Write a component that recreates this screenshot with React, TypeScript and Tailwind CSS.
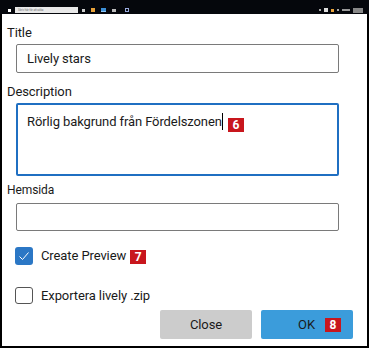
import React from "react";

const font = { fontFamily: 'Roboto, "Noto Sans", sans-serif' };

function Badge({ n }: { n: string }) {
  return (
    <span className="inline-flex items-center justify-center w-[16px] h-[14px] bg-[#c8161d] text-white text-[12px] font-bold leading-none tracking-normal">
      {n}
    </span>
  );
}

export default function App() {
  return (
    <div className="w-[369px] h-[348px] bg-black flex flex-col tracking-[-0.1px]" style={font}>
      {/* taskbar strip */}
      <div className="h-[14px] shrink-0 bg-[#05070c] relative flex items-end">
        <div className="flex items-center h-[7px] w-full pb-[1px]">
          <div className="w-[3px] h-[3px] bg-white ml-[8px]" />
          <div className="w-[63px] h-[6px] bg-[#e8e8e8] ml-[4px] flex items-center">
            <span className="text-[3px] text-[#777] ml-[3px] leading-none">Skriv här för att söka</span>
          </div>
          <div className="flex items-center gap-[6px] ml-[4px]">
            <div className="w-[3px] h-[3px] bg-[#ccc]" />
            <div className="w-[4px] h-[4px] bg-[#e8a23a]" />
            <div className="w-[5px] h-[4px] bg-[#3c8fd6] border-b border-[#8cc6f5]" />
            <div className="w-[4px] h-[3px] bg-[#bbb]" />
            <div className="w-[4px] h-[4px] border border-[#9ad] ml-[3px]" />
          </div>
          <div className="flex-1" />
          <div className="flex items-center gap-[3px] mr-[6px]">
            <div className="w-[2px] h-[2px] bg-[#aaa]" />
            <div className="w-[4px] h-[4px] bg-[#ddd]" />
            <div className="w-[3px] h-[3px] bg-[#e8a23a]" />
            <div className="w-[2px] h-[2px] bg-[#aaa]" />
            <div className="w-[8px] h-[2px] bg-[#999]" />
            <div className="w-[10px] h-[5px] bg-[#888]" />
          </div>
        </div>
      </div>
      {/* dialog */}
      <div className="flex-1 bg-white mx-[2px] mb-[2px] pl-[5px] flex flex-col text-[#1a1a1a]">
        <div className="mt-[11px] text-[13px] leading-[16px]">Title</div>
        <div className="mt-[3px] ml-[9px] w-[323px] h-[29px] border border-[#7a7a7a] rounded-[2px] flex items-center pl-[10px] text-[13px]">
          Lively stars
        </div>
        <div className="mt-[11px] text-[13px] leading-[16px]">Description</div>
        <div className="mt-[3px] ml-[9px] w-[323px] h-[73px] border-2 border-[#1f6fc2] rounded-[2px] pl-[9px] pt-[9px] text-[13px] flex items-start">
          <span className="leading-[16px]">Rörlig bakgrund från Fördelszonen</span>
          <span className="w-[1px] h-[17px] bg-black -mt-[1px]" />
          <span className="ml-[5px] mt-[1px]"><Badge n="6" /></span>
        </div>
        <div className="mt-[6px] text-[12px] leading-[16px]">Hemsida</div>
        <div className="mt-[5px] ml-[9px] w-[323px] h-[28px] border border-[#7a7a7a] rounded-[2px]" />
        <div className="mt-[16px] ml-[8px] flex items-center h-[18px]">
          <div className="w-[18px] h-[18px] rounded-[3px] bg-[#2b77c5] flex items-center justify-center">
            <svg width="12" height="10" viewBox="0 0 12 10">
              <path d="M1.5 5.5 L4.5 8.5 L10.5 1.5" stroke="white" strokeWidth="1" fill="none" />
            </svg>
          </div>
          <span className="ml-[8px] text-[13px]">Create Preview</span>
          <span className="ml-[4px]"><Badge n="7" /></span>
        </div>
        <div className="mt-[22px] ml-[8px] flex items-center h-[17px]">
          <div className="w-[18px] h-[17px] rounded-[3px] border border-[#555] bg-white" />
          <span className="ml-[8px] text-[13px]">Exportera lively .zip</span>
        </div>
        <div className="mt-[6px] flex justify-end pr-[14px] gap-[9px]">
          <button className="w-[92px] h-[29px] bg-[#cccccc] rounded-[2px] text-[13px] text-[#1a1a1a]">Close</button>
          <button className="w-[92px] h-[29px] bg-[#3b9cdb] rounded-[2px] text-[13px] text-[#1a1a1a] flex items-center justify-center gap-[10px] pl-[25px]">
            <span>OK</span>
            <Badge n="8" />
          </button>
        </div>
      </div>
    </div>
  );
}
